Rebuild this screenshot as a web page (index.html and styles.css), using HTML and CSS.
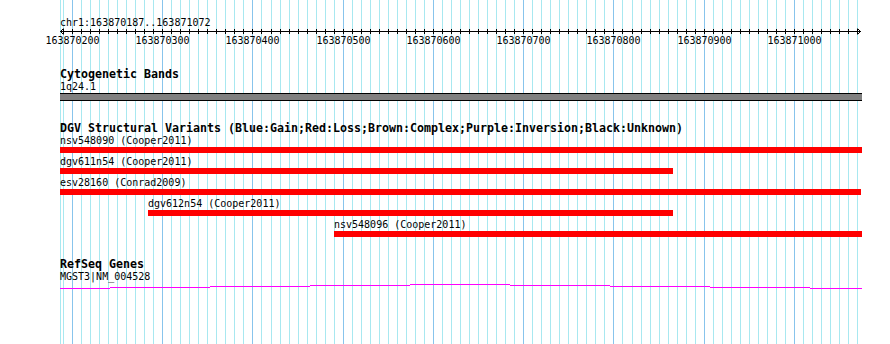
FILE: index.html
```html
<!DOCTYPE html>
<html>
  <head>
    <meta charset="utf-8" />
    <title>chr1:163870187..163871072</title>
    <link rel="stylesheet" href="styles.css">
  </head>

  <body>
    <div class="panel">
      <!-- grid: one line every 10 bp, darker every 100 bp -->
      <svg class="grid" width="890" height="344">
        <path class="minor" d="M60.5 0V344M63.5 0V344M81.5 0V344M90.5 0V344M99.5 0V344M108.5 0V344M117.5 0V344M126.5 0V344M135.5 0V344M144.5 0V344M153.5 0V344M171.5 0V344M180.5 0V344M189.5 0V344M198.5 0V344M207.5 0V344M216.5 0V344M225.5 0V344M234.5 0V344M243.5 0V344M261.5 0V344M271.5 0V344M280.5 0V344M289.5 0V344M298.5 0V344M307.5 0V344M316.5 0V344M325.5 0V344M334.5 0V344M352.5 0V344M361.5 0V344M370.5 0V344M379.5 0V344M388.5 0V344M397.5 0V344M406.5 0V344M415.5 0V344M424.5 0V344M442.5 0V344M451.5 0V344M460.5 0V344M469.5 0V344M478.5 0V344M487.5 0V344M496.5 0V344M505.5 0V344M514.5 0V344M532.5 0V344M541.5 0V344M550.5 0V344M559.5 0V344M568.5 0V344M577.5 0V344M586.5 0V344M595.5 0V344M604.5 0V344M622.5 0V344M632.5 0V344M641.5 0V344M650.5 0V344M659.5 0V344M668.5 0V344M677.5 0V344M686.5 0V344M695.5 0V344M713.5 0V344M722.5 0V344M731.5 0V344M740.5 0V344M749.5 0V344M758.5 0V344M767.5 0V344M776.5 0V344M785.5 0V344M803.5 0V344M812.5 0V344M821.5 0V344M830.5 0V344M839.5 0V344M848.5 0V344M857.5 0V344" />
        <path class="major" d="M72.5 0V344M162.5 0V344M252.5 0V344M343.5 0V344M433.5 0V344M523.5 0V344M613.5 0V344M704.5 0V344M794.5 0V344" />
      </svg>

      <svg class="ruler" width="890" height="50">
        <text x="60" y="25.5">chr1:163870187..163871072</text>
        <path class="axis" d="M60 31.5H861M63.5 28.5L60.5 31.5L63.5 34.5M857.5 28.5L860.5 31.5L857.5 34.5" />
        <path class="axis" d="M63.5 29V34M72.5 29V34M81.5 29V34M90.5 29V34M99.5 29V34M108.5 29V34M117.5 29V34M126.5 29V34M135.5 29V34M144.5 29V34M153.5 29V34M162.5 29V34M171.5 29V34M180.5 29V34M189.5 29V34M198.5 29V34M207.5 29V34M216.5 29V34M225.5 29V34M234.5 29V34M243.5 29V34M252.5 29V34M261.5 29V34M271.5 29V34M280.5 29V34M289.5 29V34M298.5 29V34M307.5 29V34M316.5 29V34M325.5 29V34M334.5 29V34M343.5 29V34M352.5 29V34M361.5 29V34M370.5 29V34M379.5 29V34M388.5 29V34M397.5 29V34M406.5 29V34M415.5 29V34M424.5 29V34M433.5 29V34M442.5 29V34M451.5 29V34M460.5 29V34M469.5 29V34M478.5 29V34M487.5 29V34M496.5 29V34M505.5 29V34M514.5 29V34M523.5 29V34M532.5 29V34M541.5 29V34M550.5 29V34M559.5 29V34M568.5 29V34M577.5 29V34M586.5 29V34M595.5 29V34M604.5 29V34M613.5 29V34M622.5 29V34M632.5 29V34M641.5 29V34M650.5 29V34M659.5 29V34M668.5 29V34M677.5 29V34M686.5 29V34M695.5 29V34M704.5 29V34M713.5 29V34M722.5 29V34M731.5 29V34M740.5 29V34M749.5 29V34M758.5 29V34M767.5 29V34M776.5 29V34M785.5 29V34M794.5 29V34M803.5 29V34M812.5 29V34M821.5 29V34M830.5 29V34M839.5 29V34M848.5 29V34M857.5 29V34" />
        <g class="tick-labels">
          <text x="72.5" y="44">163870200</text>
          <text x="162.5" y="44">163870300</text>
          <text x="252.5" y="44">163870400</text>
          <text x="343.5" y="44">163870500</text>
          <text x="433.5" y="44">163870600</text>
          <text x="523.5" y="44">163870700</text>
          <text x="613.5" y="44">163870800</text>
          <text x="704.5" y="44">163870900</text>
          <text x="794.5" y="44">163871000</text>
        </g>
      </svg>

      <div class="tracks">
        <section class="track cyto">
          <h2 class="track-title">Cytogenetic Bands</h2>
          <div class="feat-label">1q24.1</div>
          <div class="band"></div>
        </section>

        <section class="track dgv">
          <h2 class="track-title">DGV Structural Variants (Blue:Gain;Red:Loss;Brown:Complex;Purple:Inversion;Black:Unknown)</h2>
          <div class="feature">
            <div class="feat-label">nsv548090 (Cooper2011)</div>
            <div class="bar" style="width: 802px"></div>
          </div>
          <div class="feature">
            <div class="feat-label">dgv611n54 (Cooper2011)</div>
            <div class="bar" style="width: 613px"></div>
          </div>
          <div class="feature">
            <div class="feat-label">esv28160 (Conrad2009)</div>
            <div class="bar" style="width: 801px"></div>
          </div>
          <div class="feature" style="margin-left: 88px">
            <div class="feat-label">dgv612n54 (Cooper2011)</div>
            <div class="bar" style="width: 525px"></div>
          </div>
          <div class="feature" style="margin-left: 274px">
            <div class="feat-label">nsv548096 (Cooper2011)</div>
            <div class="bar" style="width: 528px"></div>
          </div>
        </section>

        <section class="track refseq">
          <h2 class="track-title">RefSeq Genes</h2>
          <div class="feat-label">MGST3|NM_004528</div>
          <svg class="gene" width="802" height="7">
            <rect x="0" y="5" width="50" height="1" />
            <rect x="50" y="4" width="100" height="1" />
            <rect x="150" y="3" width="100" height="1" />
            <rect x="250" y="2" width="100" height="1" />
            <rect x="350" y="1" width="100" height="1" />
            <rect x="450" y="2" width="100" height="1" />
            <rect x="550" y="3" width="100" height="1" />
            <rect x="650" y="4" width="100" height="1" />
            <rect x="750" y="5" width="52" height="1" />
          </svg>
        </section>
      </div>
    </div>
  </body>
</html>
```

FILE: styles.css
```css
* {
  box-sizing: border-box;
}

html,
body {
  margin: 0;
  padding: 0;
}

body {
  background: #fff;
  color: #000;
  font-family: "DejaVu Sans Mono", monospace;
}

.panel {
  position: relative;
  width: 890px;
  height: 344px;
  overflow: hidden;
}

.grid {
  position: absolute;
  top: 0;
  left: 0;
}

.grid path {
  fill: none;
  stroke-width: 1;
}

.grid .minor {
  stroke: #a8e8f0;
}

.grid .major {
  stroke: #88c4ec;
}

.ruler {
  display: block;
  position: relative;
}

.ruler text {
  font-family: "DejaVu Sans Mono", monospace;
  font-size: 10px;
  fill: #000;
}

.ruler .tick-labels text {
  text-anchor: middle;
}

.ruler .axis {
  fill: none;
  stroke: #000;
  stroke-width: 1;
}

.tracks {
  position: relative;
  padding-left: 60px;
}

.track-title {
  margin: 0;
  font-size: 11.63px;
  font-weight: bold;
  line-height: 12px;
  white-space: nowrap;
}

.feat-label {
  font-size: 10px;
  line-height: 13px;
  white-space: pre;
}

.cyto {
  padding-top: 18px;
}

.band {
  width: 802px;
  height: 8px;
  background: #808080;
  border-top: 1px solid #000;
  border-bottom: 1px solid #000;
}

.dgv,
.refseq {
  padding-top: 21px;
}

.feature + .feature {
  margin-top: 2px;
}

.bar {
  height: 6px;
  background: #f00;
}

.gene {
  display: block;
}

.gene rect {
  fill: #f0f;
}
```
